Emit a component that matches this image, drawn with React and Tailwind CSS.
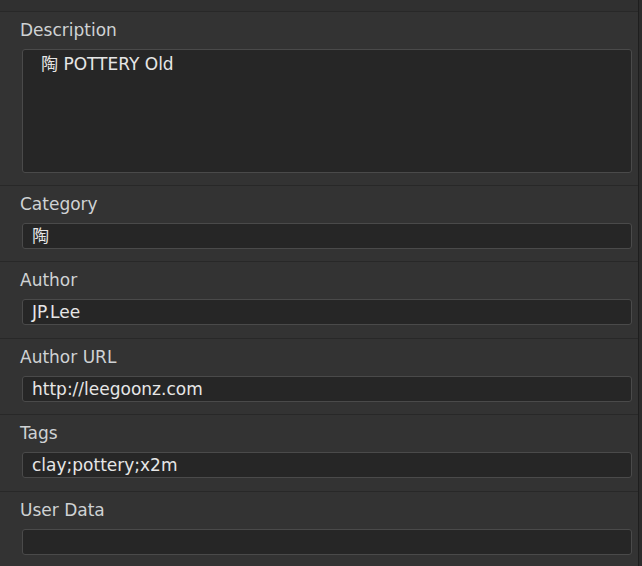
import React from "react";

const font = { fontFamily: '"DejaVu Sans", "Noto Sans CJK KR", sans-serif' };

function Field({ label, value, extra }) {
  return (
    <div className={"shrink-0 border-t border-[#282828] pt-2 " + (extra ? "pb-[13px]" : "pb-[12px]")}>
      <div className="h-5 pl-[20px] text-[17px] leading-5 text-[#cfd2d4]">{label}</div>
      <div className="mt-[9px] ml-[22px] mr-[6px] h-[26px] rounded-[3px] border border-[#4a4a4a] bg-[#262626] pl-[9px] text-[17px] leading-[24px] text-[#e6e6e6]">
        {value}
      </div>
    </div>
  );
}

export default function App() {
  return (
    <div className="flex h-[566px] w-[642px] overflow-hidden bg-[#333333]" style={font}>
      <div className="flex w-[638px] shrink-0 flex-col">
        <div className="h-[11px] shrink-0 bg-[#303030]" />
        <div className="shrink-0 border-t border-[#282828] pt-2 pb-[12px]">
          <div className="h-5 pl-[20px] text-[17px] leading-5 text-[#cfd2d4]">Description</div>
          <div className="mt-[9px] ml-[22px] mr-[6px] h-[124px] rounded-[3px] border border-[#4a4a4a] bg-[#262626] pl-[18px] pt-[4px] text-[17px] leading-5 text-[#e6e6e6]">
            陶 POTTERY Old
          </div>
        </div>
        <Field label="Category" value="陶" />
        <Field label="Author" value="JP.Lee" extra />
        <Field label="Author URL" value="http://leegoonz.com" />
        <Field label="Tags" value="clay;pottery;x2m" extra />
        <Field label="User Data" value="" />
      </div>
      <div className="w-px shrink-0 bg-[#1e1e1e]" />
      <div className="flex-1 bg-[#2c2c2c]" />
    </div>
  );
}
